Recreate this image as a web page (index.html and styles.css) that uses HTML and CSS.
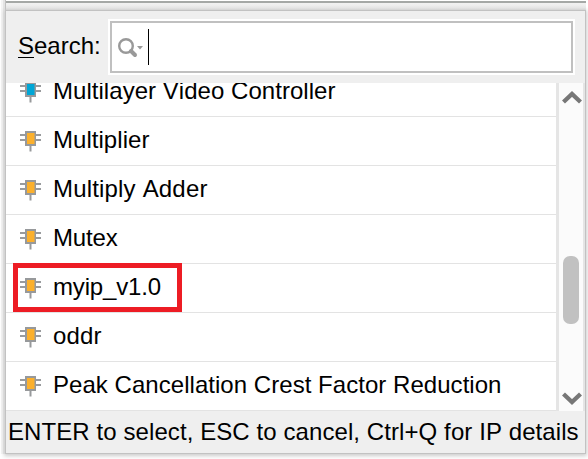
FILE: index.html
```html
<!DOCTYPE html>
<html lang="en">
<head>
<meta charset="utf-8">
<title>IP Search</title>
<link rel="stylesheet" href="styles.css">
</head>
<body>
<svg width="0" height="0" class="defs">
  <symbol id="chip" viewBox="0 0 22 22">
    <path d="M0 5H21M0 10H21" stroke="#999b9d" stroke-width="1.800"/>
    <path d="M10.500 15V21.500" stroke="#97999b" stroke-width="2"/>
    <rect x="5" y="1" width="11" height="15" fill="#97999b"/>
    <rect x="7" y="3" width="7.500" height="11" fill="currentColor"/>
  </symbol>
</svg>
<div class="window">
  <div class="topbar"></div>
  <main class="panel">
    <header class="search">
      <label for="q"><span class="key">S</span>earch:</label>
      <div class="field" id="q">
        <svg class="lens" width="26" height="20" viewBox="0 0 26 20"><circle cx="8" cy="8" r="6.800" fill="none" stroke="#999" stroke-width="2.400"/><path d="M13 13L17 17" stroke="#999" stroke-width="4" stroke-linecap="round"/><path d="M19 8H25L22 11.500Z" fill="#999"/></svg>
        <span class="caret"></span>
      </div>
    </header>
    <section class="body">
      <ul class="list">
        <li><svg class="chip blue"><use href="#chip"/></svg><span>Multilayer Video Controller</span></li>
        <li><svg class="chip"><use href="#chip"/></svg><span>Multiplier</span></li>
        <li><svg class="chip"><use href="#chip"/></svg><span class="wide">Multiply Adder</span></li>
        <li><svg class="chip"><use href="#chip"/></svg><span class="tight">Mutex</span></li>
        <li class="marked"><svg class="chip"><use href="#chip"/></svg><span class="tight">myip_v1.0</span></li>
        <li><svg class="chip"><use href="#chip"/></svg><span class="wide">oddr</span></li>
        <li><svg class="chip"><use href="#chip"/></svg><span>Peak Cancellation Crest Factor Reduction</span></li>
      </ul>
      <div class="scroll">
        <svg class="arrow" viewBox="0 0 20 13"><path d="M1.500 11L10 3L18.500 11" fill="none" stroke="#777" stroke-width="4.300"/></svg>
        <div class="thumb"></div>
        <svg class="arrow down" viewBox="0 0 20 13"><path d="M1.500 2L10 10L18.500 2" fill="none" stroke="#777" stroke-width="4.300"/></svg>
      </div>
    </section>
    <footer>ENTER to select, ESC to cancel, Ctrl+Q for IP details</footer>
  </main>
</div>
</body>
</html>
```
FILE: styles.css
```css
*, *::after { box-sizing: border-box; }
body { margin: 0; width: 588px; height: 459px; overflow: hidden; background: #fff; font: 24px "Liberation Sans", Arial, sans-serif; font-kerning: none; color: #000; }
.defs { display: block; }
.window { height: 459px; padding: 1px 2px 5px 6px; overflow: hidden; background: linear-gradient(90deg, #fff 0 1px, #f4f4f4 1px 3px, #e4e4e4 3px 5px, #c0c0c0 5px 6px, #fff 6px) 0 0 / 100% 454px no-repeat; }
.topbar { height: 10px; background: linear-gradient(#a5a8a6 0 2px, #f2f2f2 2px, #e9e9e9 7px, #d5d5d5 10px); }
.panel { width: 579px; height: 442px; display: flex; flex-direction: column; background: #efefef; box-shadow: 0 0 0 1px #c2c2c2, 0 1px 4px 2px #ccc; }
.search { height: 72px; display: flex; align-items: flex-start; padding: 8px 10px 0 12px; }
.search label { width: 90px; padding-top: 13px; line-height: 28px; white-space: nowrap; }
.key { border-bottom: 1px solid #000; display: inline-block; line-height: 22px; }
.field { width: 467px; height: 56px; flex: none; border: 2px solid #fff; box-shadow: inset 0 0 0 2px #c0c0c0; background: #fff; display: flex; padding: 8px 0 0 8px; }
.lens { margin-top: 9px; flex: none; }
.caret { width: 1px; height: 36px; background: #000; margin-left: 4px; }
.body { height: 328px; display: flex; overflow: hidden; background: #fff; }
.list { width: 550px; height: 328px; margin: 0; padding: 0; list-style: none; display: flex; flex-direction: column; justify-content: flex-end; }
.list li { height: 49px; flex: none; border-bottom: 1px solid #e3e3e3; display: flex; padding-left: 14px; line-height: 46px; letter-spacing: 0.04px; white-space: nowrap; position: relative; }
.list .wide { letter-spacing: 0.18px; }
.list .tight { letter-spacing: -0.15px; }
.chip { width: 22px; height: 22px; color: #fbb02d; margin: 13px 11px 0 0; flex: none; }
.blue { color: #00a6d6; }
.marked::after { content: ""; position: absolute; left: 7px; top: -1px; width: 169px; height: 49px; border: 5px solid #ed1c24; }
.scroll { width: 29px; border-left: 3px solid #e5e5e5; border-right: 2px solid #e5e5e5; background: #fbfbfb; display: flex; flex-direction: column; padding: 8px 0 6px 3px; }
.arrow { width: 20px; height: 13px; flex: none; }
.thumb { width: 16px; height: 68px; flex: none; border-radius: 7px; background: #c1c1c1; margin: 152px 0 0 1px; }
.down { margin-top: auto; }
footer { height: 42px; line-height: 42px; padding-left: 2px; letter-spacing: 0.085px; white-space: nowrap; }
```
